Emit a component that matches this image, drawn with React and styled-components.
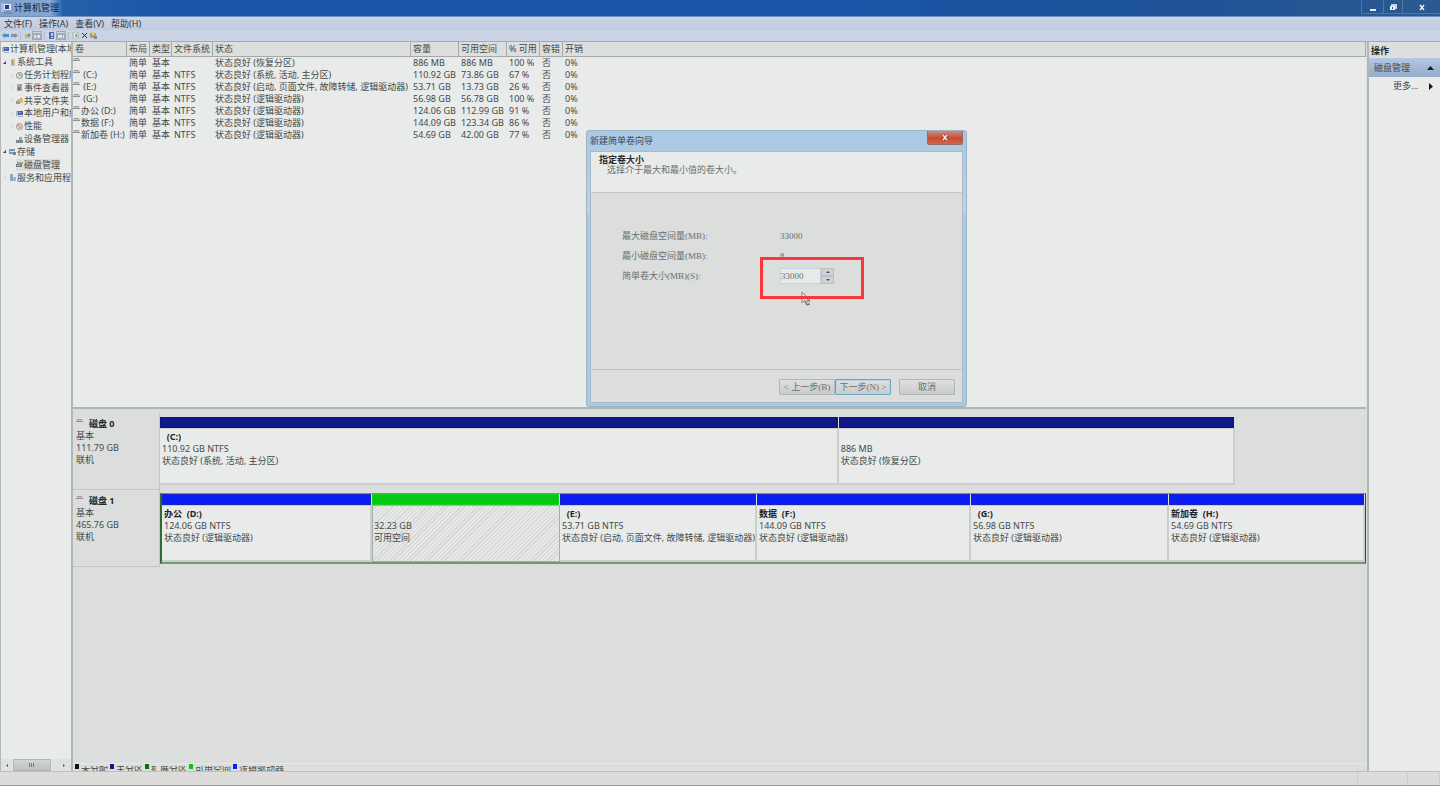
import styled, { createGlobalStyle, css } from "styled-components";

const volumes = [
	{ name: "", fs: "", status: "状态良好 (恢复分区)", size: "886 MB", free: "886 MB", percent: "100 %" },
	{ name: " (C:)", fs: "NTFS", status: "状态良好 (系统, 活动, 主分区)", size: "110.92 GB", free: "73.86 GB", percent: "67 %" },
	{ name: " (E:)", fs: "NTFS", status: "状态良好 (启动, 页面文件, 故障转储, 逻辑驱动器)", size: "53.71 GB", free: "13.73 GB", percent: "26 %" },
	{ name: " (G:)", fs: "NTFS", status: "状态良好 (逻辑驱动器)", size: "56.98 GB", free: "56.78 GB", percent: "100 %" },
	{ name: "办公 (D:)", fs: "NTFS", status: "状态良好 (逻辑驱动器)", size: "124.06 GB", free: "112.99 GB", percent: "91 %" },
	{ name: "数据 (F:)", fs: "NTFS", status: "状态良好 (逻辑驱动器)", size: "144.09 GB", free: "123.34 GB", percent: "86 %" },
	{ name: "新加卷 (H:)", fs: "NTFS", status: "状态良好 (逻辑驱动器)", size: "54.69 GB", free: "42.00 GB", percent: "77 %" },
];

const columns = [
	{ label: "卷", width: 54 },
	{ label: "布局", width: 23 },
	{ label: "类型", width: 22 },
	{ label: "文件系统", width: 41 },
	{ label: "状态", width: 198 },
	{ label: "容量", width: 48 },
	{ label: "可用空间", width: 48 },
	{ label: "% 可用", width: 33 },
	{ label: "容错", width: 23 },
	{ label: "开销" },
];

const tree = [
	{ label: "计算机管理(本地)", level: 0, icon: "computer" },
	{ label: "系统工具", level: 1, icon: "tools", arrow: "open" },
	{ label: "任务计划程序", level: 2, icon: "clock", arrow: "closed" },
	{ label: "事件查看器", level: 2, icon: "event", arrow: "closed" },
	{ label: "共享文件夹", level: 2, icon: "folder", arrow: "closed" },
	{ label: "本地用户和组", level: 2, icon: "computer", arrow: "closed" },
	{ label: "性能", level: 2, icon: "perf", arrow: "closed" },
	{ label: "设备管理器", level: 2, icon: "device" },
	{ label: "存储", level: 1, icon: "storage", arrow: "open" },
	{ label: "磁盘管理", level: 2, icon: "disk", selected: true },
	{ label: "服务和应用程序", level: 1, icon: "service", arrow: "closed" },
];

const disks = [
	{
		name: "磁盘 0",
		size: "111.79 GB",
		parts: [
			{ name: "  (C:)", info: "110.92 GB NTFS", status: "状态良好 (系统, 活动, 主分区)", grow: 679 },
			{ name: " ", info: "886 MB", status: "状态良好 (恢复分区)", grow: 396 },
		],
	},
	{
		name: "磁盘 1",
		size: "465.76 GB",
		extended: true,
		parts: [
			{ name: "办公  (D:)", info: "124.06 GB NTFS", status: "状态良好 (逻辑驱动器)", grow: 210 },
			{ name: " ", info: "32.23 GB", status: "可用空间", grow: 188, free: true },
			{ name: "  (E:)", info: "53.71 GB NTFS", status: "状态良好 (启动, 页面文件, 故障转储, 逻辑驱动器)", grow: 197 },
			{ name: "数据  (F:)", info: "144.09 GB NTFS", status: "状态良好 (逻辑驱动器)", grow: 214 },
			{ name: "  (G:)", info: "56.98 GB NTFS", status: "状态良好 (逻辑驱动器)", grow: 198 },
			{ name: "新加卷  (H:)", info: "54.69 GB NTFS", status: "状态良好 (逻辑驱动器)", grow: 196 },
		],
	},
];

const legend = [
	{ label: "未分配", color: "#101413" },
	{ label: "主分区", color: "#10188a" },
	{ label: "扩展分区", color: "#0a6a14" },
	{ label: "可用空间", color: "#05c810" },
	{ label: "逻辑驱动器", color: "#0b1df5" },
];

const iconShapes = {
	computer: (
		<>
			<path d="M0 1h2v5H0z" fill="#a9b2bd" />
			<path d="M2 1h5v4H2z" fill="#4a62a8" />
			<path d="M3 2h2v1H3z" fill="#8ba2d8" />
			<path d="M2 6h5v1H2z" fill="#a0a8b0" />
		</>
	),
	tools: (
		<>
			<path d="M2 0h4v7H2z" fill="#cfc08c" />
			<path d="M3 1h1v5H3z" fill="#9a9688" />
		</>
	),
	clock: (
		<>
			<circle cx="3.5" cy="3.5" r="3" fill="#dfe0d8" stroke="#8b8d90" />
			<path d="M3.5 1.5v2h2" fill="none" stroke="#a98c50" />
		</>
	),
	event: (
		<>
			<path d="M1 0h5v7H1z" fill="#a0a2b6" />
			<path d="M2 3h2v3H2z" fill="#62668f" />
			<path d="M4 1h2v2H4z" fill="#b8948a" />
		</>
	),
	folder: (
		<>
			<path d="M1 2h6v4H1z" fill="#d3bd7c" />
			<path d="M0 4h4v3H0z" fill="#9ba084" />
			<path d="M4 1h2v1H4z" fill="#b29e6c" />
		</>
	),
	perf: (
		<>
			<circle cx="3.5" cy="3.5" r="3" fill="#e0d6d4" stroke="#bb8885" />
			<path d="M1.5 1.5l4 4" stroke="#858586" />
		</>
	),
	device: (
		<>
			<path d="M3 1h3v3H3z" fill="#9aa4ab" />
			<path d="M0 4h7v3H0z" fill="#7e888f" />
		</>
	),
	storage: (
		<>
			<path d="M0 1h6v5H0z" fill="#7e98ae" />
			<path d="M1 3h5v1H1z" fill="#d6e2e8" />
			<path d="M4 4h3v3H4z" fill="#5e8bb0" />
		</>
	),
	disk: (
		<>
			<path d="M1 1h6v2H1z" fill="#9da19f" />
			<path d="M0 3h6v3H0z" fill="#7b807f" />
			<path d="M1 4h3v1H1z" fill="#b5b9b7" />
		</>
	),
	service: (
		<>
			<path d="M1 0h3v7H1z" fill="#8fabbf" />
			<path d="M4 3h3v4H4z" fill="#a4b8c4" />
		</>
	),
	up: (
		<>
			<path d="M1 2h5v4H1z" fill="#c9b778" />
			<path d="M3 4l2-3 2 3z" fill="#6b9c68" />
		</>
	),
	doc: (
		<>
			<path d="M1 0h5v7H1z" fill="#e4e9e5" stroke="#a8b3ac" />
			<path d="M3 2h2v3H3z" fill="#7cb07f" />
		</>
	),
	help: (
		<>
			<path d="M1 0h5v7H1z" fill="#4a6bb4" />
			<path d="M3 1h2v3H3zM3 5h2v1H3z" fill="#c4d0ec" />
		</>
	),
	settings: (
		<>
			<path d="M0 1h6v5H0z" fill="#aca274" />
			<path d="M2 0h3v3H2z" fill="#d5c98a" />
			<path d="M4 4h3v3H4z" fill="#8a898e" />
		</>
	),
};

const Icon = ({ name }) => (
	<IconSvg viewBox="0 0 7 7" aria-hidden="true">
		{iconShapes[name]}
	</IconSvg>
);

const DriveIcon = () => (
	<DriveSvg viewBox="0 0 7 5" aria-hidden="true">
		<path d="M1 1h5v1H1z" fill="#9a9e9c" />
		<path d="M0 2h7v1H0z" fill="#c4c7c5" />
		<path d="M0 3h7v1H0z" fill="#8f9391" />
	</DriveSvg>
);

const TitleBar = () => (
	<Title>
		<TitleText>
			<svg width="12" height="13" viewBox="0 0 12 13" aria-hidden="true">
				<path d="M1 1h3v9H1z" fill="#aebdd0" />
				<path d="M4 2h7v6H4z" fill="#dce6f2" />
				<path d="M5 3h4v4H5z" fill="#1d36a8" />
				<path d="M6 9h3v1H6zM4 10h8v2H4z" fill="#7b8da8" />
			</svg>
			计算机管理
		</TitleText>
		<WindowButtons>
			<WindowButton aria-label="最小化" $width={22}>
				<svg width="8" height="10" viewBox="0 0 8 10">
					<path d="M1 7h6v2H1z" fill="#e8eef5" />
				</svg>
			</WindowButton>
			<WindowButton aria-label="还原" $width={19}>
				<svg width="8" height="10" viewBox="0 0 8 10">
					<path d="M2 2h6v5H2z" fill="#c4d0de" />
					<path d="M1 4h5v4H1z" fill="#eef3f8" />
					<path d="M3 5h1v2H3z" fill="#274b7c" />
				</svg>
			</WindowButton>
			<WindowButton aria-label="关闭" $width={38}>
				<svg width="8" height="10" viewBox="0 0 8 10">
					<path d="M2 3l4 5M6 3L2 8" stroke="#e8eef5" strokeWidth="1.5" />
				</svg>
			</WindowButton>
		</WindowButtons>
	</Title>
);

const Toolbar = () => (
	<Tools>
		<Tool aria-label="后退">
			<svg width="7" height="7" viewBox="0 0 7 7">
				<path d="M0 3.5L3 1v1h4v3H3v1z" fill="#3b94d0" />
			</svg>
		</Tool>
		<Tool aria-label="前进">
			<svg width="7" height="7" viewBox="0 0 7 7">
				<path d="M7 3.5L4 1v1H0v3h4v1z" fill="#8a949f" />
			</svg>
		</Tool>
		<ToolDivider />
		<Tool aria-label="上移">
			<Icon name="up" />
		</Tool>
		<Tool aria-label="显示控制台树" $framed>
			<svg width="8" height="6" viewBox="0 0 8 6">
				<path d="M0 0h8v6H0z" fill="#a3acb6" />
				<path d="M1 2h2v3H1zM4 2h3v3H4z" fill="#dde2e6" />
			</svg>
		</Tool>
		<ToolDivider />
		<Tool aria-label="帮助">
			<Icon name="help" />
		</Tool>
		<Tool aria-label="显示操作窗格" $framed>
			<svg width="8" height="6" viewBox="0 0 8 6">
				<path d="M0 0h8v6H0z" fill="#a3acb6" />
				<path d="M1 2h4v3H1zM6 2h1v3H6z" fill="#dde2e6" />
			</svg>
		</Tool>
		<ToolDivider />
		<Tool aria-label="刷新">
			<Icon name="doc" />
		</Tool>
		<Tool aria-label="删除">
			<svg width="7" height="7" viewBox="0 0 7 7">
				<path d="M1 1l5 5M6 1L1 6" stroke="#2c3032" />
			</svg>
		</Tool>
		<Tool aria-label="设置">
			<Icon name="settings" />
		</Tool>
	</Tools>
);

const Sidebar = () => (
	<SidePane>
		<Tree>
			{tree.map((item) => (
				<TreeItem key={item.label} $level={item.level}>
					{item.level > 0 && (
						<Arrow viewBox="0 0 4 5" aria-hidden="true">
							{item.arrow === "open" && <path d="M3 1v3H0z" fill="#3c4040" />}
							{item.arrow === "closed" && (
								<path d="M1 0.5l2 2-2 2" fill="none" stroke="#c8ccca" />
							)}
						</Arrow>
					)}
					<TreeLabel $selected={item.selected}>
						<Icon name={item.icon} />
						{item.label}
					</TreeLabel>
				</TreeItem>
			))}
		</Tree>
		<ScrollBar>
			<ScrollButton aria-label="向左滚动">
				<svg width="3" height="5" viewBox="0 0 3 5">
					<path d="M2 1v3L0 2.5z" fill="#54585a" />
				</svg>
			</ScrollButton>
			<Thumb>
				<svg width="6" height="4" viewBox="0 0 6 4">
					<path d="M0.5 0v4M2.5 0v4M4.5 0v4" stroke="#74787a" />
				</svg>
			</Thumb>
			<ScrollButton aria-label="向右滚动">
				<svg width="3" height="5" viewBox="0 0 3 5">
					<path d="M1 1v3l2-1.5z" fill="#54585a" />
				</svg>
			</ScrollButton>
		</ScrollBar>
	</SidePane>
);

const VolumeTable = () => (
	<VolumePane>
		<Table>
			<colgroup>
				{columns.map((col) => (
					<Col key={col.label} $width={col.width} />
				))}
			</colgroup>
			<thead>
				<tr>
					{columns.map((col) => (
						<HeadCell key={col.label}>{col.label}</HeadCell>
					))}
				</tr>
			</thead>
			<tbody>
				{volumes.map((vol, index) => (
					<tr key={index}>
						<NameCell>
							<VolumeName>
								<DriveIcon />
								{vol.name}
							</VolumeName>
						</NameCell>
						<Cell>简单</Cell>
						<Cell>基本</Cell>
						<Cell>{vol.fs}</Cell>
						<Cell>{vol.status}</Cell>
						<Cell>{vol.size}</Cell>
						<Cell>{vol.free}</Cell>
						<Cell>{vol.percent}</Cell>
						<Cell>否</Cell>
						<Cell>0%</Cell>
					</tr>
				))}
			</tbody>
		</Table>
	</VolumePane>
);

const DiskMap = () => (
	<DiskPane>
		<div>
			{disks.map((disk) => (
				<DiskRow key={disk.name}>
					<DiskInfo>
						<DiskName>
							<DriveIcon />
							{disk.name}
						</DiskName>
						<div>基本</div>
						<div>{disk.size}</div>
						<div>联机</div>
					</DiskInfo>
					<Partitions $extended={disk.extended}>
						{disk.parts.map((part) => (
							<Partition key={part.info} $grow={part.grow}>
								<Stripe $free={part.free} $logical={disk.extended} />
								<PartBody $free={part.free}>
									<PartName>{part.name}</PartName>
									<div>{part.info}</div>
									<div>{part.status}</div>
								</PartBody>
							</Partition>
						))}
					</Partitions>
				</DiskRow>
			))}
		</div>
		<Legend>
			{legend.map((item) => (
				<LegendItem key={item.label}>
					<Swatch $color={item.color} />
					<LegendText>{item.label}</LegendText>
				</LegendItem>
			))}
		</Legend>
	</DiskPane>
);

const Actions = () => (
	<ActionPane>
		<ActionHeader>操作</ActionHeader>
		<ActionGroup>
			磁盘管理
			<svg width="7" height="4" viewBox="0 0 7 4" aria-hidden="true">
				<path d="M3.5 0L7 4H0z" fill="#15191b" />
			</svg>
		</ActionGroup>
		<ActionItem>
			更多...
			<svg width="4" height="7" viewBox="0 0 4 7" aria-hidden="true">
				<path d="M0 0l4 3.5L0 7z" fill="#15191b" />
			</svg>
		</ActionItem>
	</ActionPane>
);

const Wizard = () => (
	<Dialog role="dialog" aria-labelledby="wizard-title">
		<DialogTitle>
			<span id="wizard-title">新建简单卷向导</span>
			<CloseButton aria-label="关闭">
				<svg width="8" height="7" viewBox="0 0 8 7">
					<path d="M2 1l4 5M6 1L2 6" stroke="#8c4c44" strokeWidth="3" />
					<path d="M2 1l4 5M6 1L2 6" stroke="#f0ecea" strokeWidth="1.5" />
				</svg>
			</CloseButton>
		</DialogTitle>
		<DialogInner>
			<DialogHeader>
				<Heading>指定卷大小</Heading>
				<SubHeading>选择介于最大和最小值的卷大小。</SubHeading>
			</DialogHeader>
			<Form>
				<span>最大磁盘空间量(MB):</span>
				<span>33000</span>
				<span>最小磁盘空间量(MB):</span>
				<span>8</span>
				<label htmlFor="size">简单卷大小(MB)(S):</label>
				<Spinner>
					<SizeInput id="size" defaultValue="33000" />
					<SpinButtons>
						<SpinButton type="button" aria-label="增加">
							<svg width="4" height="2" viewBox="0 0 4 2">
								<path d="M2 0l2 2H0z" fill="#3d55a0" />
							</svg>
						</SpinButton>
						<SpinButton type="button" aria-label="减少">
							<svg width="4" height="2" viewBox="0 0 4 2">
								<path d="M0 0h4L2 2z" fill="#3d55a0" />
							</svg>
						</SpinButton>
					</SpinButtons>
				</Spinner>
			</Form>
			<DialogFooter>
				<WizardButton>&lt; 上一步(B)</WizardButton>
				<WizardButton $primary>下一步(N) &gt;</WizardButton>
				<CancelButton>取消</CancelButton>
			</DialogFooter>
		</DialogInner>
		<Pointer viewBox="0 0 11 15" aria-hidden="true">
			<path
				d="M1 1v11l2.5-2.5 2 4.5 2-1-2-4H9z"
				fill="#e6e9e7"
				stroke="#858a88"
			/>
			<path d="M4 10l2 4 3-1M7 9l2 2" fill="none" stroke="#5f6462" />
		</Pointer>
		<Highlight />
	</Dialog>
);

const App = () => (
	<>
		<GlobalStyle />
		<Window>
			<TitleBar />
			<Menu>
				<MenuItem>文件(F)</MenuItem>
				<MenuItem>操作(A)</MenuItem>
				<MenuItem>查看(V)</MenuItem>
				<MenuItem>帮助(H)</MenuItem>
			</Menu>
			<Toolbar />
			<Content>
				<Sidebar />
				<Main>
					<VolumeTable />
					<DiskMap />
				</Main>
				<Actions />
			</Content>
			<StatusBar>
				<StatusPart />
				<StatusPart />
				<StatusPart />
			</StatusBar>
			<Wizard />
		</Window>
	</>
);

export default App;

const GlobalStyle = createGlobalStyle`
	* {
		box-sizing: border-box;
	}

	body {
		margin: 0;
		color: #454a49;
		font: 9px/12px "Noto Sans", "Noto Sans CJK SC", sans-serif;
	}

	button, input {
		margin: 0;
		padding: 0;
		border: none;
		background: none;
		color: inherit;
		font: inherit;
	}

	svg {
		display: block;
		flex: none;
	}
`;

const IconSvg = styled.svg`
	width: 7px;
	height: 7px;
`;

const DriveSvg = styled.svg`
	width: 7px;
	height: 5px;
`;

const Window = styled.div`
	position: relative;
	display: flex;
	flex-direction: column;
	height: 100vh;
	overflow: hidden;
	background: #dbdedc;
	border-bottom: 1px solid #7d9fc0;
`;

const Title = styled.header`
	display: flex;
	justify-content: space-between;
	height: 17px;
	background: linear-gradient(to right, #2b65ac 0, #1a56a8 12%, #1b55a9 55%, #1d5298 80%, #2b5a91 100%);
	border-bottom: 1px solid #6f92c3;
`;

const TitleText = styled.div`
	display: flex;
	align-items: center;
	gap: 2px;
	padding-right: 4px;
	color: #14233c;
	background: linear-gradient(to right, #7fa0cc, #86a6d2 80%, #86a6d200);
`;

const WindowButtons = styled.div`
	display: flex;
	height: 14px;
`;

const WindowButton = styled.button`
	display: flex;
	align-items: center;
	justify-content: center;
	width: ${(props) => props.$width}px;
	border: solid #50779f;
	border-width: 0 0 1px 1px;
`;

const Menu = styled.nav`
	display: flex;
	gap: 7px;
	height: 13px;
	padding-left: 4px;
	background: linear-gradient(#cdd6e6, #bfcade);
`;

const MenuItem = styled.button`
	color: #30353b;
	line-height: 13px;
`;

const Tools = styled.div`
	display: flex;
	align-items: center;
	gap: 1px;
	height: 11px;
	padding-left: 1px;
	background: #cbd4e5;
`;

const Tool = styled.button`
	display: flex;
	align-items: center;
	justify-content: center;
	min-width: 8px;
	height: 9px;

	${(props) =>
		props.$framed &&
		css`
			min-width: 10px;
			border: 1px solid #9ba8ba;
		`}
`;

const ToolDivider = styled.span`
	width: 1px;
	height: 8px;
	margin: 0 1px;
	background: #b3bdce;
`;

const Content = styled.div`
	display: flex;
	flex: 1;
	min-height: 0;
	border-top: 1px solid #a5aaaa;
	border-bottom: 1px solid #bcc0be;
`;

const SidePane = styled.aside`
	display: flex;
	flex-direction: column;
	justify-content: space-between;
	width: 71px;
	padding: 1px 0 0;
	overflow: hidden;
	background: #e8ebe9;
	border-left: 1px solid #b4b9b7;
`;

const Tree = styled.ul`
	display: grid;
	grid-auto-rows: 1fr;
	height: 141px;
	margin: 0;
	padding: 0 0 0 1px;
	list-style: none;
`;

const TreeItem = styled.li`
	display: flex;
	align-items: center;
	gap: 2px;
	padding-left: ${(props) => (props.$level === 2 ? 8 : props.$level)}px;
	overflow: hidden;
	white-space: nowrap;
`;

const Arrow = styled.svg`
	width: 4px;
	height: 5px;
`;

const TreeLabel = styled.span`
	display: flex;
	align-items: center;
	gap: 1px;
	background: ${(props) => (props.$selected ? "#d9dcdb" : "none")};
`;

const ScrollBar = styled.div`
	display: flex;
	height: 12px;
	background: #dfe2e0;
`;

const ScrollButton = styled.button`
	display: flex;
	align-items: center;
	justify-content: center;
	width: 12px;
`;

const Thumb = styled.div`
	display: flex;
	align-items: center;
	justify-content: center;
	width: 38px;
	margin-right: 6px;
	background: linear-gradient(#d2d5d4, #bdc1c0);
	border: 1px solid #b2b6b4;
	border-radius: 1px;
`;

const Main = styled.main`
	display: flex;
	flex: 1;
	flex-direction: column;
	min-width: 0;
	border: solid #b3b7b5;
	border-width: 0 2px;
`;

const VolumePane = styled.section`
	height: 367px;
	margin-right: 1px;
	background: #e8ebe9;
	border-bottom: 2px solid #b0b4b2;
`;

const Table = styled.table`
	width: 100%;
	border-spacing: 0;
	table-layout: fixed;
	text-align: left;
	white-space: nowrap;
`;

const Col = styled.col`
	width: ${(props) => (props.$width ? `${props.$width}px` : "auto")};
`;

const HeadCell = styled.th`
	height: 14px;
	padding: 0 0 0 2px;
	background: #dddfde;
	border: solid #a5a9a7;
	border-width: 0 1px 1px 0;
	font-weight: normal;
	line-height: 14px;
`;

const Cell = styled.td`
	height: 12px;
	padding: 0 0 0 2px;
	line-height: 12px;
`;

const NameCell = styled(Cell)`
	padding: 0;
`;

const VolumeName = styled.div`
	display: flex;
	align-items: flex-start;
	gap: 1px;
	height: 12px;
	white-space: pre;
`;

const DiskPane = styled.section`
	display: flex;
	flex: 1;
	flex-direction: column;
	justify-content: space-between;
	padding-top: 4px;
	background: #dbdedc;
`;

const DiskRow = styled.div`
	display: flex;
	align-items: flex-start;
	height: 77px;
`;

const DiskInfo = styled.div`
	width: 87px;
	height: 77px;
	padding: 5px 0 0 3px;
	border: solid #c3c6c4;
	border-width: 0 1px 1px 0;
`;

const DiskName = styled.div`
	display: flex;
	align-items: flex-start;
	gap: 6px;
	color: #24292a;
	font-weight: bold;
`;

const Partitions = styled.div`
	display: flex;
	width: ${(props) => (props.$extended ? "calc(100% - 88px)" : "calc(89% - 77px)")};
	margin-top: 4px;

	${(props) =>
		props.$extended &&
		css`
			margin-top: 3px;
			border: solid #6f9a72;
			border-width: 1px 1px 2px 2px;
			border-left-color: #2d6b35;
			border-right-color: #0f5c1b;
		`}
`;

const Partition = styled.div`
	flex: ${(props) => props.$grow} 1 0;
	min-width: 0;
`;

const Stripe = styled.div`
	height: 11px;
	margin-right: 1px;
	background: ${(props) => (props.$free ? "#05c810" : props.$logical ? "#0b1df5" : "#10188a")};
	border: 1px solid ${(props) => (props.$free ? "#18cf22" : props.$logical ? "#1a20c4" : "#0c1280")};
`;

const PartBody = styled.div`
	height: 57px;
	padding: 2px 0 0 2px;
	overflow: hidden;
	background: #e8ebe9;
	border: solid #cbcecc;
	border-width: 1px 2px 2px 0;
	white-space: pre;

	${(props) =>
		props.$free &&
		css`
			padding-left: 1px;
			background: repeating-linear-gradient(135deg, #e5e8e6 0 2px, #d3d6d4 2px 3px);
			border: 1px solid #a9adab;
		`}
`;

const PartName = styled.div`
	height: 12px;
	color: #1e2324;
	font-weight: bold;
`;

const Legend = styled.footer`
	display: flex;
	gap: 2px;
	height: 8px;
	padding-left: 2px;
	border-top: 1px solid #e6e8e7;
`;

const LegendItem = styled.div`
	display: flex;
	align-items: flex-end;
	gap: 2px;
`;

const Swatch = styled.span`
	align-self: flex-start;
	width: 4px;
	height: 5px;
	background: ${(props) => props.$color};
`;

const LegendText = styled.span`
	height: 5px;
	overflow: hidden;
	line-height: 6px;
`;

const ActionPane = styled.aside`
	width: 71px;
	background: #e8ebe9;
`;

const ActionHeader = styled.h2`
	height: 16px;
	margin: 0;
	padding-left: 2px;
	background: #dddfde;
	color: #24292a;
	font-size: 9px;
	line-height: 17px;
`;

const ActionGroup = styled.button`
	display: flex;
	align-items: center;
	justify-content: space-between;
	width: 100%;
	height: 19px;
	padding: 1px 6px 0 5px;
	background: linear-gradient(#b3c7e0, #92acce);
`;

const ActionItem = styled.button`
	display: flex;
	align-items: center;
	justify-content: space-between;
	width: 100%;
	height: 18px;
	padding: 0 7px 0 24px;
`;

const StatusBar = styled.footer`
	display: grid;
	grid-template-columns: 1fr 50px 32px;
	height: 13px;
	background: #dedcda;
`;

const StatusPart = styled.div`
	border-right: 1px solid #d0cecd;
`;

const Dialog = styled.section`
	position: absolute;
	top: 130px;
	left: 586px;
	width: 381px;
	padding: 0 3px 3px;
	background: linear-gradient(#a9c8e4, #bcd2e8 83px, #a9c9e8 84px, #a9c9e8);
	border: 1px solid #9db3c6;
	border-radius: 3px;
	color: #6a6f6d;
	font-family: "Liberation Serif", "Noto Sans CJK SC", serif;
`;

const DialogTitle = styled.div`
	display: flex;
	align-items: flex-start;
	justify-content: space-between;
	height: 20px;
	color: #3a4654;
	line-height: 20px;
`;

const CloseButton = styled.button`
	display: flex;
	align-items: center;
	justify-content: center;
	width: 36px;
	height: 14px;
	background: linear-gradient(#d18b7e, #c4543f 50%, #c8482e 51%, #d3674a);
	border: 1px solid #9c6a66;
	border-top: none;
	border-radius: 0 0 2px 2px;
`;

const DialogInner = styled.div`
	background: #dbdedc;
	border: 1px solid #a9bac8;
`;

const DialogHeader = styled.div`
	height: 41px;
	padding: 3px 8px;
	background: #e8ebe9;
	border-bottom: 1px solid #c4c7c5;
	line-height: 10px;
`;

const Heading = styled.h1`
	margin: 0;
	color: #24292a;
	font-size: 9px;
`;

const SubHeading = styled.p`
	margin: 0 0 0 8px;
`;

const Form = styled.form`
	display: grid;
	grid-template-columns: 158px 1fr;
	grid-auto-rows: 20px;
	align-items: center;
	height: 177px;
	padding: 33px 0 0 31px;
	border-bottom: 1px solid #c0c3c1;
`;

const Spinner = styled.div`
	display: flex;
	width: 54px;
	height: 16px;
`;

const SizeInput = styled.input`
	width: 41px;
	padding: 0 0 1px;
	background: #e8ebe9;
	border: 1px solid #c3d1da;
`;

const SpinButtons = styled.div`
	display: grid;
	flex: 1;
`;

const SpinButton = styled.button`
	display: flex;
	align-items: center;
	justify-content: center;
	background: #d0d3d2;
	border: 1px solid #bdc1bf;
`;

const DialogFooter = styled.div`
	display: flex;
	justify-content: flex-end;
	height: 32px;
	padding: 9px 7px 0 0;
`;

const WizardButton = styled.button`
	width: 56px;
	height: 16px;
	background: linear-gradient(#dee1df, #d3d6d4 50%, #c8cbc9);
	border: 1px solid #b2b6b4;
	border-radius: 1px;
	white-space: nowrap;

	${(props) =>
		props.$primary &&
		css`
			border-color: #6ba5c3;
			box-shadow: inset 0 0 0 1px #b5d3e0;
		`}
`;

const CancelButton = styled(WizardButton)`
	margin-left: 8px;
`;

const Pointer = styled.svg`
	position: absolute;
	top: 160px;
	left: 214px;
	width: 11px;
	height: 15px;
`;

const Highlight = styled.div`
	position: absolute;
	top: 126px;
	left: 173px;
	width: 104px;
	height: 42px;
	border: 3px solid #fc3636;
	pointer-events: none;
`;
